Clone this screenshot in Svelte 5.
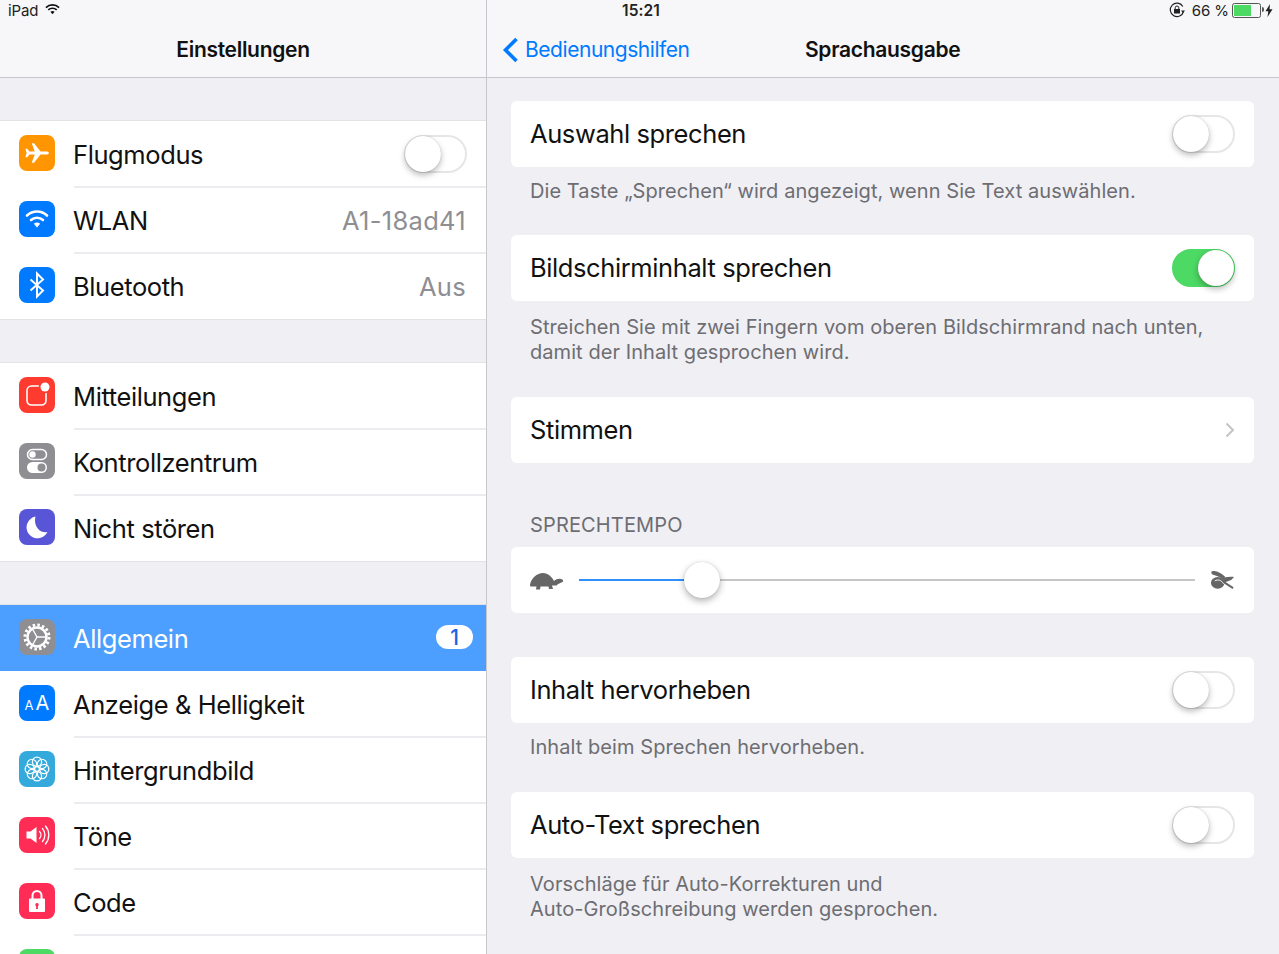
<script>
  const groups = [
    [
      { label: 'Flugmodus', icon: 'plane', color: '#ff9500', toggle: true },
      { label: 'WLAN', icon: 'wifi', color: '#007aff', value: 'A1-18ad41' },
      { label: 'Bluetooth', icon: 'bt', color: '#007aff', value: 'Aus' }
    ],
    [
      { label: 'Mitteilungen', icon: 'notify', color: '#ff3b30' },
      { label: 'Kontrollzentrum', icon: 'control', color: '#8e8e93' },
      { label: 'Nicht stören', icon: 'moon', color: '#5856d6' }
    ],
    [
      { label: 'Allgemein', icon: 'gear', color: '#8e8e93', active: true, badge: '1' },
      { label: 'Anzeige & Helligkeit', icon: 'aa', color: '#007aff' },
      { label: 'Hintergrundbild', icon: 'flower', color: '#34aadc' },
      { label: 'Töne', icon: 'sound', color: '#ff2d55' },
      { label: 'Code', icon: 'lock', color: '#ff2d55' },
      { label: '', icon: 'none', color: '#4cd964' }
    ]
  ]
  const petals = [0, 45, 90, 135, 180, 225, 270, 315]
</script>

{#snippet appIcon(name)}
  <svg viewBox="0 0 36 36" width="36" height="36" fill="none">
    {#if name === 'plane'}
      <path transform="translate(2.700 2.700) scale(.85)" d="M32 18c0-1.100-1.400-1.800-3-1.800h-6.800L14.500 6.600h-2.700l3.500 9.600H9.200L6.500 13H4.300l1.500 5-1.500 5h2.200l2.700-3.200h6.100l-3.500 9.600h2.700l7.700-9.600H29c1.600 0 3-.7 3-1.800z" fill="#fff"/>
    {:else if name === 'wifi'}
      <g stroke="#fff" stroke-width="2.600" stroke-linecap="round">
        <path d="M8 14.500a14.500 14.500 0 0 1 20 0"/>
        <path d="M12 19a9 9 0 0 1 12 0"/>
      </g>
      <path d="M14.800 22.800a5 5 0 0 1 6.400 0L18 26.500z" fill="#fff"/>
    {:else if name === 'bt'}
      <path d="M11.500 12.500l12.500 11L18 29.500V6.500l6 6-12.500 11" stroke="#fff" stroke-width="2"/>
    {:else if name === 'notify'}
      <rect x="8" y="9" width="19" height="19" rx="4.500" stroke="#fff" stroke-width="1.600"/>
      <circle cx="26" cy="10" r="6.200" fill="#ff3b30"/>
      <circle cx="26" cy="10" r="4.500" fill="#fff"/>
    {:else if name === 'control'}
      <rect x="8.500" y="6.500" width="19" height="10" rx="5" stroke="#fff" stroke-width="1.500"/>
      <circle cx="13.500" cy="11.500" r="3.200" fill="#fff"/>
      <rect x="8" y="19" width="20" height="11" rx="5.500" fill="#fff"/>
      <circle cx="22.500" cy="24.500" r="4" fill="#8e8e93"/>
    {:else if name === 'moon'}
      <path d="M16.500 7.500A11 11 0 1 0 28.500 23c-7 1.500-14.500-5-12-15.500z" fill="#fff"/>
    {:else if name === 'gear'}
      <circle cx="18" cy="18" r="12" stroke="#fff" stroke-width="3" stroke-dasharray="2.500 2.212"/>
      <circle cx="18" cy="18" r="9.500" stroke="#fff" stroke-width="2.400"/>
      <path d="M18 18l-4.500-8M18 18h9.500M18 18l-4.500 8" stroke="#fff" stroke-width="1.400"/>
    {:else if name === 'flower'}
      <g stroke="#fff" stroke-width="1.300">
        {#each petals as a}
          <circle cx="18" cy="10.800" r="4.600" transform="rotate({a} 18 18)"/>
        {/each}
        <circle cx="18" cy="18" r="2.400"/>
      </g>
    {:else if name === 'sound'}
      <path d="M7.500 14.500h4l6-4.500v16l-6-4.500h-4z" fill="#fff"/>
      <g stroke="#fff" stroke-width="1.300" stroke-linecap="round">
        <path d="M20.500 14.500a5 5 0 0 1 0 7"/>
        <path d="M23.500 11.500a10 10 0 0 1 0 13"/>
        <path d="M26.500 9a14 14 0 0 1 0 18"/>
      </g>
    {:else if name === 'lock'}
      <path d="M13.500 16v-3.500a4.500 4.500 0 0 1 9 0V16" stroke="#fff" stroke-width="2"/>
      <path fill-rule="evenodd" d="M11 15.500h14a1 1 0 0 1 1 1V28a1 1 0 0 1-1 1H11a1 1 0 0 1-1-1V16.500a1 1 0 0 1 1-1zM18 20a1.800 1.800 0 0 0-.9 3.300V26h1.800v-2.700A1.800 1.800 0 0 0 18 20z" fill="#fff"/>
    {/if}
  </svg>
{/snippet}

{#snippet toggle(on)}
  <span class="switch" class:on><span class="knob"></span></span>
{/snippet}

<div class="page">
  <aside class="side">
    <header class="bar">
      <div class="status">
        <span>iPad</span>
        <svg class="st-wifi" viewBox="0 0 16 12" width="15" height="12" fill="none">
          <g stroke="#111" stroke-width="1.800">
            <path d="M1 4.500a10 10 0 0 1 14 0"/>
            <path d="M3.500 7a6.500 6.500 0 0 1 9 0"/>
          </g>
          <path d="M5.800 9a3.500 3.500 0 0 1 4.400 0L8 11.500z" fill="#111"/>
        </svg>
      </div>
      <h1 class="title center">Einstellungen</h1>
    </header>

    <div class="side-list">
      {#each groups as group}
        <ul class="group">
          {#each group as row}
            <li class="row" class:active={row.active}>
              <span class="app-icon" style="background:{row.color}">
                {#if row.icon === 'aa'}
                  <span class="aa"><small>A</small>A</span>
                {:else}
                  {@render appIcon(row.icon)}
                {/if}
              </span>
              <span class="row-main">
                <span class="label">{row.label}</span>
                {#if row.toggle}{@render toggle(false)}{/if}
                {#if row.value}<span class="value">{row.value}</span>{/if}
                {#if row.badge}<span class="badge">{row.badge}</span>{/if}
              </span>
            </li>
          {/each}
        </ul>
      {/each}
    </div>
  </aside>

  <main class="detail">
    <header class="bar">
      <div class="status">
        <span class="time">15:21</span>
        <span class="status-right">
          <svg viewBox="0 0 16 16" width="16" height="16" fill="none">
            <path d="M14.500 9.500A6.700 6.700 0 1 1 13.800 4.500" stroke="#222" stroke-width="1.200"/>
            <path d="M12 8.500h4l-2 2.500z" fill="#222"/>
            <rect x="5" y="7" width="6" height="4.500" fill="#222"/>
            <path d="M6.200 7V5.800a1.800 1.800 0 0 1 3.600 0V7" stroke="#222" stroke-width="1"/>
          </svg>
          <span class="pct">66 %</span>
          <span class="battery"><span class="level" style="width:66%"></span></span>
          <svg class="bolt" viewBox="0 0 8 13" width="8" height="13"><path d="M5 0L.5 7.300h2.800L2.500 13 7.500 5.300H4.500z" fill="#222"/></svg>
        </span>
      </div>
      <div class="nav-row">
        <span class="back">
          <svg viewBox="0 0 17 26" width="17" height="26" fill="none"><path d="M14.500 2L3.500 13l11 11" stroke="#007aff" stroke-width="3.600"/></svg>
          Bedienungshilfen
        </span>
        <h1 class="title">Sprachausgabe</h1>
      </div>
    </header>

    <div class="content">
      <div class="card"><span class="label">Auswahl sprechen</span>{@render toggle(false)}</div>
      <p class="note">Die Taste „Sprechen“ wird angezeigt, wenn Sie Text auswählen.</p>

      <div class="card"><span class="label">Bildschirminhalt sprechen</span>{@render toggle(true)}</div>
      <p class="note two">Streichen Sie mit zwei Fingern vom oberen Bildschirmrand nach unten,<br>damit der Inhalt gesprochen wird.</p>

      <div class="card"><span class="label">Stimmen</span>
        <svg viewBox="0 0 10 16" width="10" height="16" fill="none"><path d="M1.500 1.500L8 8l-6.500 6.500" stroke="#c4c4c8" stroke-width="2"/></svg>
      </div>

      <h2 class="section">SPRECHTEMPO</h2>
      <div class="card slider-card">
        <svg viewBox="0 0 34 20" width="34" height="20"><path d="M0 15C1 8 7 3 13 3c5 0 9 4 11 8 2-2 5-2.500 7-2 2 .5 3 2 1.500 3-2 1-4.500 1.500-6 3.500H22l1 3.500h-4l-.5-2.500h-8L10 19.500H6l.5-3H1c-.7 0-1-.7-1-1.500z" fill="#666"/></svg>
        <div class="slider">
          <span class="fill" style="width:20%"></span>
          <span class="thumb" style="left:20%"></span>
        </div>
        <svg viewBox="0 0 26 20" width="25" height="20" fill="none">
          <path d="M2 1C6-.5 11 2 16 7l-3 2C9 6 5 5 3 4.500 1.500 4 .8 2 2 1z" fill="#666"/>
          <ellipse cx="8" cy="13" rx="7" ry="6" fill="#666"/>
          <path d="M12 7c4 1 8-1 13 0l-3 3-7 2.500z" fill="#666"/>
          <path d="M14 12l10 6.500" stroke="#666" stroke-width="2"/>
          <path d="M5 11c3-2 7-1 9 3" stroke="#fff" stroke-width="1"/>
        </svg>
      </div>

      <div class="spacer"></div>
      <div class="card"><span class="label">Inhalt hervorheben</span>{@render toggle(false)}</div>
      <p class="note roomy">Inhalt beim Sprechen hervorheben.</p>

      <div class="card"><span class="label">Auto-Text sprechen</span>{@render toggle(false)}</div>
      <p class="note two">Vorschläge für Auto-Korrekturen und<br>Auto-Großschreibung werden gesprochen.</p>
    </div>
  </main>
</div>

<style>
  :global(body) {
    margin: 0;
    background: #efeff4;
    font-family: Inter, "Liberation Sans", sans-serif;
    overflow: hidden;
  }

  .page {
    display: grid;
    grid-template-columns: 487px 792px;
    height: 954px;
    overflow: hidden;
    color: #111;
  }

  .side {
    border-right: 1px solid #c8c8cc;
    overflow: hidden;
  }

  .bar {
    height: 77px;
    background: #f7f7f9;
    border-bottom: 1px solid #c6c6ca;
  }

  .status {
    display: flex;
    align-items: center;
    height: 20px;
    padding: 0 8px;
    font-size: 15px;
    letter-spacing: -0.1px;
    color: #222;
  }

  .st-wifi {
    margin-left: 7px;
    margin-top: -3px;
  }

  .title {
    margin: 0;
    font-size: 21px;
    font-weight: 600;
    letter-spacing: -0.3px;
    color: #111;
  }

  .center {
    text-align: center;
    padding-top: 17px;
  }

  .time {
    margin-left: 127px;
    font-size: 15.500px;
    letter-spacing: 0.1px;
    font-weight: 600;
  }

  .status-right {
    margin-left: auto;
    display: flex;
    align-items: center;
    margin-right: -2px;
  }

  .pct {
    margin-left: 7px;
  }

  .battery {
    position: relative;
    width: 25px;
    height: 11px;
    margin-left: 3px;
    border: 1px solid #555;
    border-radius: 2.500px;
    padding: 1px;
  }

  .battery::after {
    content: "";
    position: absolute;
    right: -4px;
    top: 3px;
    width: 2px;
    height: 5px;
    background: #555;
    border-radius: 0 2px 2px 0;
  }

  .level {
    display: block;
    height: 100%;
    background: #4cd964;
  }

  .bolt {
    margin-left: 4px;
  }

  .nav-row {
    display: flex;
    align-items: center;
    height: 57px;
    padding: 2px 0 0 15px;
    box-sizing: border-box;
  }

  .back {
    display: flex;
    align-items: center;
    gap: 6px;
    width: 303px;
    font-size: 21px;
    letter-spacing: -0.45px;
    color: #007aff;
  }

  .side-list {
    height: 876px;
    overflow: hidden;
    background: #efeff4;
  }

  .group {
    list-style: none;
    margin: 42px 0 0;
    padding: 0;
    background: #fff;
    border-top: 1px solid #e3e3e7;
    border-bottom: 1px solid #e3e3e7;
  }

  .row {
    display: flex;
    align-items: stretch;
    height: 66px;
    padding-left: 19px;
  }

  .app-icon {
    flex: none;
    display: grid;
    place-items: center;
    align-self: center;
    width: 36px;
    height: 36px;
    margin: -2px 19px 0 0;
    border-radius: 8px;
  }

  .row-main {
    flex: 1;
    display: flex;
    align-items: center;
    justify-content: space-between;
    margin-bottom: -1px;
    padding: 2px 20px 0 0;
    border-bottom: 2px solid #ececf0;
  }

  .row:last-child .row-main {
    margin-bottom: 0;
    padding-top: 0;
    border-bottom: none;
  }

  .row-main .label {
    margin-left: -1px;
  }

  .row-main .switch {
    margin: -2px -1px 0 0;
  }

  .card .label {
    margin-top: -1px;
  }

  .label {
    font-size: 25.500px;
    letter-spacing: -0.4px;
    color: #111;
  }

  .value {
    font-size: 25.500px;
    letter-spacing: 0.3px;
    color: #8e8e93;
  }

  .row.active {
    background: #4c9ffe;
  }

  .row.active .label {
    color: #fff;
  }

  .row.active .row-main {
    margin-bottom: 0;
    padding: 0 13px 0 0;
    border-bottom: none;
  }

  .badge {
    display: grid;
    place-items: center;
    width: 37px;
    height: 24px;
    margin-top: -2px;
    border-radius: 12px;
    background: #fff;
    color: #1a62e6;
    font-size: 21px;
    font-weight: 500;
  }

  .aa {
    color: #fff;
    font-size: 20px;
    letter-spacing: 0;
  }

  .aa small {
    margin-right: 2px;
    font-size: 13px;
  }

  .switch {
    position: relative;
    display: block;
    box-sizing: border-box;
    width: 63px;
    height: 38px;
    border: 2px solid #e6e6e8;
    border-radius: 19px;
    background: #fff;
  }

  .switch.on {
    background: #4cd964;
    border-color: #4cd964;
  }

  .knob {
    position: absolute;
    top: -1px;
    left: -1px;
    width: 36px;
    height: 36px;
    border-radius: 50%;
    background: #fff;
    box-shadow: 0 3px 6px rgba(0, 0, 0, 0.28), 0 0 1px rgba(0, 0, 0, 0.25);
  }

  .switch.on .knob {
    left: auto;
    right: -1px;
  }

  .content {
    padding: 23px 25px 0 24px;
  }

  .card {
    display: flex;
    align-items: center;
    justify-content: space-between;
    box-sizing: border-box;
    height: 66px;
    padding: 0 19px;
    background: #fff;
    border-radius: 6px;
  }

  .note {
    margin: 0;
    padding: 12px 19px 31px;
    font-size: 20px;
    line-height: 25px;
    letter-spacing: 0.07px;
    color: #6d6d72;
  }

  .note.two {
    padding-top: 14px;
    padding-bottom: 32px;
  }

  .note.roomy {
    padding-bottom: 32px;
  }

  .section {
    margin: 0;
    padding: 50px 19px 9px;
    font-size: 20px;
    line-height: 25px;
    font-weight: 400;
    letter-spacing: 0.15px;
    color: #6d6d72;
  }

  .slider-card {
    gap: 15px;
  }

  .slider {
    position: relative;
    flex: 1;
    height: 2px;
    background: #c6c6c8;
  }

  .fill {
    position: absolute;
    left: 0;
    top: 0;
    height: 100%;
    background: #2f8ffb;
  }

  .thumb {
    position: absolute;
    top: -17px;
    width: 36px;
    height: 36px;
    margin-left: -18px;
    border-radius: 50%;
    background: #fff;
    box-shadow: 0 3px 7px rgba(0, 0, 0, 0.3), 0 0 1px rgba(0, 0, 0, 0.25);
  }

  .spacer {
    height: 44px;
  }
</style>
